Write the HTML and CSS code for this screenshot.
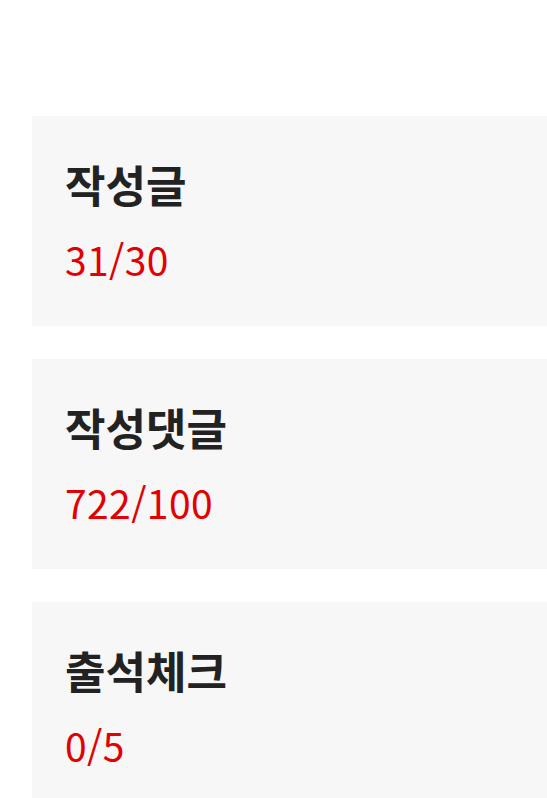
FILE: index.html
```html
<!DOCTYPE html>
<html lang="ko">
<head>
    <meta charset="UTF-8">
    <meta name="viewport" content="width=device-width, initial-scale=1.0">
    <title>활동 현황</title>
    <link rel="stylesheet" href="styles.css">
</head>
<body>
    <div class="container">
        <div class="stat-card">
            <div class="stat-title">작성글</div>
            <div class="stat-value">31/30</div>
        </div>
        <div class="stat-card">
            <div class="stat-title">작성댓글</div>
            <div class="stat-value">722/100</div>
        </div>
        <div class="stat-card">
            <div class="stat-title">출석체크</div>
            <div class="stat-value">0/5</div>
        </div>
    </div>
</body>
</html>
```

FILE: styles.css
```css
html, body {
    margin: 0;
    padding: 0;
    background: #fff;
    overflow: hidden;
}

body {
    font-family: "Noto Sans CJK KR", "Noto Sans", sans-serif;
}

.container {
    padding: 116px 0 0 32px;
    display: flex;
    flex-direction: column;
    gap: 33px;
}

.stat-card {
    box-sizing: border-box;
    height: 210px;
    padding: 39px 33px;
    background: #f7f7f7;
}

.stat-title {
    font-size: 44px;
    line-height: 58px;
    font-weight: bold;
    color: #222;
}

.stat-value {
    margin-top: 21px;
    font-size: 39px;
    line-height: 50px;
    letter-spacing: 0.4px;
    color: #e30000;
}
```
